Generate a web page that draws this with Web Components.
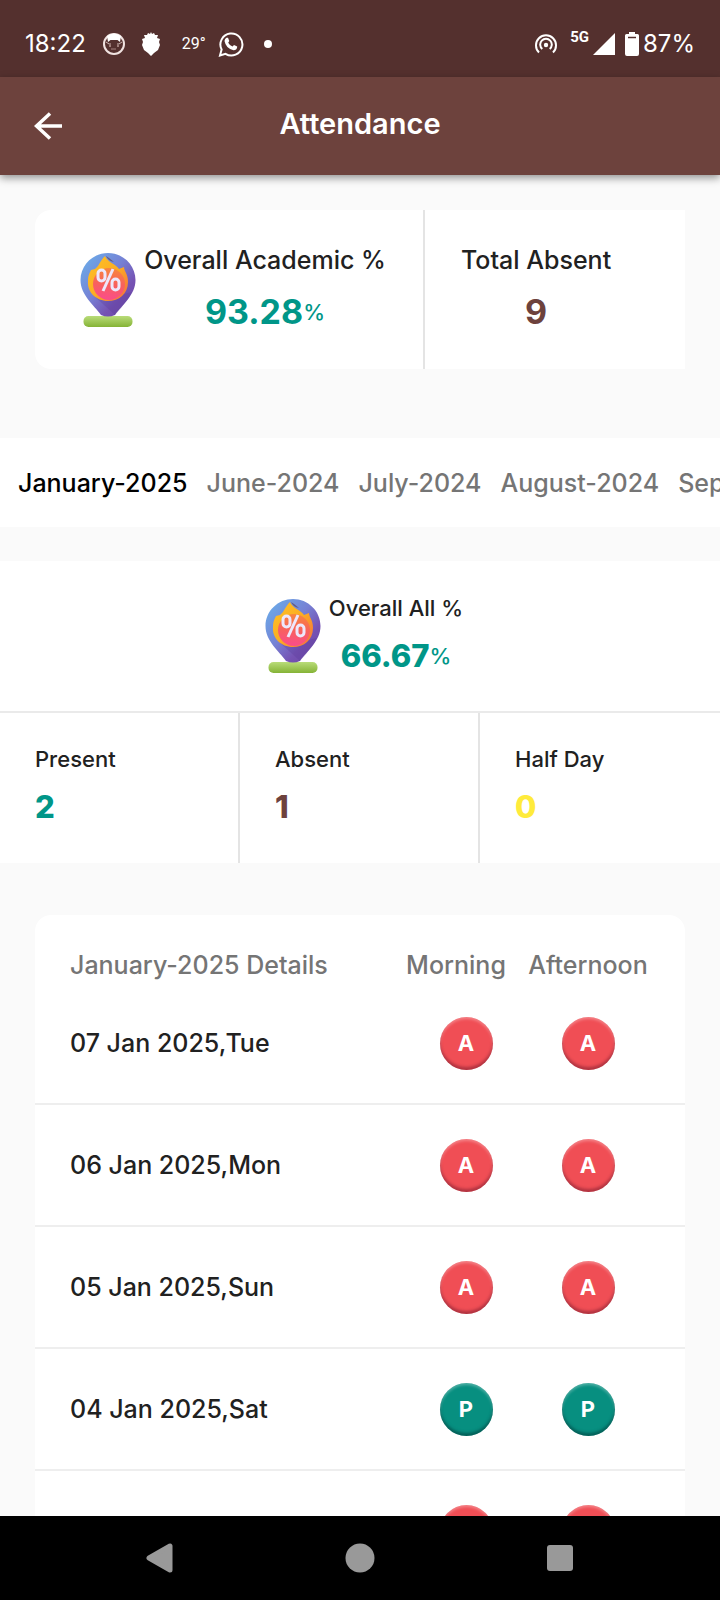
<!DOCTYPE html>
<html lang="en">
<head>
<meta charset="utf-8">
<meta name="viewport" content="width=device-width, initial-scale=1">
<title>Attendance</title>
<style>
  html, body { margin: 0; background: #fafafa; }
  body { font-family: Inter, Roboto, sans-serif; color: #212121; }
</style>
</head>
<body>
<attendance-app></attendance-app>
<script>
const define = (name, html, setup) => {
  const template = document.createElement('template');
  template.innerHTML = html;
  customElements.define(name, class extends HTMLElement {
    constructor() {
      super();
      this.attachShadow({ mode: 'open' }).append(template.content.cloneNode(true));
    }
    connectedCallback() { if (setup) setup(this, this.shadowRoot); }
  });
};

define('status-bar', `
<style>
  :host { display: flex; justify-content: space-between; align-items: center; flex: none;
    height: 77px; padding: 10px 25px 0; box-sizing: border-box; background: #54302e; color: #fff;
    font: 400 24px/28px Inter, sans-serif; }
  .group { display: flex; align-items: center; }
  svg { display: block; }
  .left svg { margin-left: 16px; }
  .temp { font: 400 16px/28px Roboto, sans-serif; margin-left: 22px; }
  .left .chat { margin-left: 12px; }
  .left .dot { margin-left: 20px; }
  .net { font: 700 15px/15px Roboto, sans-serif; margin-left: 13px; align-self: flex-start; }
  .signal { margin-left: 4px; }
  .battery { margin: 0 4px 0 10px; }
</style>
<div class="group left">
  <span>18:22</span>
  <svg width="24" height="24" viewBox="0 0 24 24"><circle cx="12" cy="12" r="10" fill="none" stroke="#f0e2e0" stroke-width="2"/><path d="M5 4Q12 -1 19 4L18 10L15.500 8H8.500L6 10Z" fill="#fff"/><path d="M4 10L7 12H9M20 10L17 12H15" stroke="#cdb5b2" fill="none"/><circle cx="8" cy="14" r="1" fill="#b99895"/><circle cx="16" cy="14" r="1" fill="#b99895"/><path d="M9 17H14" fill="none" stroke="#a58380"/></svg>
  <svg width="18" height="24" viewBox="0 0 18 24"><path d="M9 0L10 2L12 1L13 3H16L15 6L18 7L17 10L18 13L16 18L12 21L9 24L6 21L2 18L0 13L1 10L0 7L3 6L2 3H5L6 1L8 2Z" fill="#fff"/></svg>
  <span class="temp">29°</span>
  <svg class="chat" width="26" height="26" viewBox="0 0 26 26"><path d="M2 24.500L3.600 18.500A11 11 0 1 1 7.500 22.800Z" fill="none" stroke="#fff" stroke-width="2"/><path d="M8.500 6.800H10L11.300 10L10.200 11.700Q11.800 14.500 14.500 15.600L16 14L19.200 15.500Q19.300 19 15.500 19.200Q8 17.800 6.500 10Q6.700 7.800 8.500 6.800Z" fill="#fff"/></svg>
  <svg class="dot" width="8" height="8"><circle cx="4" cy="4" r="4" fill="#fff"/></svg>
</div>
<div class="group">
  <svg width="22" height="22" viewBox="0 0 22 22" fill="none" stroke="#fff" stroke-width="2"><path d="M4 19.500A10 10 0 1 1 18 19.500M7.300 16A5.800 5.800 0 1 1 14.700 16"/><circle cx="11" cy="12" r="2.200" fill="#fff" stroke="none"/></svg>
  <span class="net">5G</span>
  <svg class="signal" width="22" height="22" viewBox="0 0 22 22"><path d="M22 0V22H0Z" fill="#fff"/></svg>
  <svg class="battery" width="14" height="24" viewBox="0 0 14 24"><path d="M4 0H10V2H12.500Q14 2 14 3.500V22Q14 24 12 24H2Q0 24 0 22V3.500Q0 2 1.500 2H4Z" fill="#fff"/><path d="M3 5.500H11" stroke="#54302e" stroke-width="1.500"/></svg>
  <span>87%</span>
</div>`);

define('app-bar', `
<style>
  :host { display: grid; grid-template-columns: 64px 1fr 64px; align-items: center; flex: none;
    height: 98px; padding: 0 16px; box-sizing: border-box; background: #6d423d; color: #fff;
    box-shadow: 0 3px 8px rgba(0,0,0,.42); position: relative; z-index: 1; }
  button { display: grid; place-items: center; width: 64px; height: 64px; padding: 0; border: 0; background: none; color: inherit; }
  h1 { margin: 0; text-align: center; font-size: 29px; line-height: 36px; font-weight: 600; padding-bottom: 4px; }
</style>
<button type="button" aria-label="Back"><svg width="28" height="28" viewBox="0 0 28 28" fill="none" stroke="#fff" stroke-width="3.500"><path d="M28 14H2.500M16 1.500L2.500 14L16 26.500"/></svg></button>
<h1><slot></slot></h1>`);

define('percent-pin', `
<style>:host { display: block; flex: none; width: 56px; height: 76px; } svg { display: block; }</style>
<svg width="56" height="76" viewBox="0 0 56 76" aria-hidden="true">
  <defs>
    <linearGradient id="pin" x1="0" y1="0" x2="1" y2="1"><stop offset="0" stop-color="#69b3ec"/><stop offset=".45" stop-color="#7680d4"/><stop offset=".7" stop-color="#7552b3"/><stop offset="1" stop-color="#6844a4"/></linearGradient>
    <linearGradient id="flame" x1="0" y1="0" x2="1" y2="1"><stop offset="0" stop-color="#ffc226"/><stop offset=".5" stop-color="#fbae22"/><stop offset="1" stop-color="#f36b40"/></linearGradient>
    <linearGradient id="core" x1=".5" y1="0" x2=".4" y2="1"><stop offset="0" stop-color="#f8863e"/><stop offset=".5" stop-color="#f8615c"/><stop offset="1" stop-color="#fa4c8c"/></linearGradient>
    <linearGradient id="base" x1="0" y1="0" x2="0" y2="1"><stop offset="0" stop-color="#b9dc79"/><stop offset="1" stop-color="#85b336"/></linearGradient>
  </defs>
  <rect x="3.500" y="64" width="49" height="11" rx="5" fill="url(#base)"/>
  <path d="M28 1C43 1 55.500 13 55.500 28C55.500 43 42 53 35 63Q28 66 21 63C14 53 .5 43 .5 28C.5 13 13 1 28 1Z" fill="url(#pin)"/>
  <path d="M13 43L35 63Q46 51 52 40L43 42Z" fill="#573b98" opacity=".28"/>
  <path d="M25 4C27 10 36 12 39 17L44 15C44 19 48 22 48 30C48 42 39 49 28 49C16 49 7 40 8 29C8 24 9 22 11 18L15 17C19 14 20 9 25 4Z" fill="url(#flame)"/>
  <path d="M26 4Q28 9 34 10L29 6Z" fill="#665b80"/>
  <circle cx="29" cy="32" r="16" fill="url(#core)"/>
  <g fill="none" stroke="#ede7fb" stroke-width="3"><rect x="18" y="18" width="7" height="11" rx="3.500"/><rect x="32" y="27" width="7" height="11" rx="3.500"/><path d="M33 17L23 39"/></g>
</svg>`);

/* A caption over a large figure; "unit" adds a small suffix. */
define('stat-figure', `
<style>
  :host { display: flex; flex-direction: column; align-items: flex-start; }
  :host([center]) { align-items: center; }
  .label { font-size: 22px; line-height: 28px; font-weight: 500; white-space: nowrap; }
  :host([large]) .label { font-size: 25px; }
  .value { margin-top: 12px; font-size: 31px; line-height: 44px; font-weight: 800; color: var(--tone, #009688); white-space: nowrap; display: flex; align-items: center; }
  :host([large]) .value { margin-top: 16px; font-size: 34px; font-weight: 700; }
  .unit { font-size: 22px; font-weight: 500; }
</style>
<span class="label"></span>
<span class="value"><span class="num"></span><span class="unit"></span></span>`,
(el, root) => {
  root.querySelector('.label').textContent = el.getAttribute('label');
  root.querySelector('.num').textContent = el.getAttribute('value');
  root.querySelector('.unit').textContent = el.getAttribute('unit') || '';
});

define('overall-card', `
<style>
  :host { display: grid; grid-template-columns: 3fr 2fr; margin: 35px 35px 0; min-height: 159px; background: #fff; border-radius: 16px 0 0 16px; }
  .cell { display: flex; align-items: center; }
  .academic { border-right: 2px solid #e4e4e4; justify-content: center; gap: 8px; padding-left: 8px; }
  .absent { padding-left: 36px; }
</style>
<div class="cell academic"><percent-pin></percent-pin><stat-figure large center label="Overall Academic %" value="93.28" unit="%"></stat-figure></div>
<div class="cell absent"><stat-figure large center label="Total Absent" value="9" style="--tone:#6d423d"></stat-figure></div>`);

define('month-tabs', `
<style>
  :host { display: flex; gap: 19px; align-items: center; margin-top: 69px; height: 89px; padding: 0 18px; background: #fff; overflow: hidden; }
  button { flex: none; padding: 0; border: 0; background: none; color: #757575; font: 500 25px/32px Inter, sans-serif; }
  button[aria-selected=true] { color: #000; }
</style>
<button role="tab" aria-selected="true">January-2025</button><button role="tab">June-2024</button><button role="tab">July-2024</button><button role="tab">August-2024</button><button role="tab">September-2024</button>`,
(el) => el.setAttribute('role', 'tablist'));

define('month-summary', `
<style>
  :host { display: block; margin-top: 34px; background: #fff; }
  .top { display: flex; justify-content: center; align-items: center; gap: 8px; height: 150px; padding-left: 8px; border-bottom: 2px solid #eaeaea; }
  .cells { display: grid; grid-template-columns: repeat(3, 1fr); }
  .cells > * { padding: 32px 0 34px 35px; border-right: 2px solid #e4e4e4; }
  .cells > :last-child { border-right: 0; }
</style>
<div class="top"><percent-pin></percent-pin><stat-figure center label="Overall All %" value="66.67" unit="%"></stat-figure></div>
<div class="cells">
  <stat-figure label="Present" value="2"></stat-figure>
  <stat-figure label="Absent" value="1" style="--tone:#6d423d"></stat-figure>
  <stat-figure label="Half Day" value="0" style="--tone:#ffeb3b"></stat-figure>
</div>`);

define('mark-badge', `
<style>
  :host { display: grid; place-items: center; width: 53px; height: 53px; margin: 0 auto; border-radius: 50%;
    background: #f04e55; color: #fff; font: 700 22px/28px Inter, sans-serif;
    box-shadow: inset 0 -3px 3px rgba(100,20,40,.45), inset 0 2px 3px rgba(255,255,255,.3); }
  :host([present]) { background: #078f80; box-shadow: inset 0 -3px 3px rgba(0,50,50,.5), inset 0 2px 3px rgba(255,255,255,.3); }
</style><slot></slot>`);

define('day-table', `
<style>
  :host { display: block; margin: 52px 35px 0; background: #fff; border-radius: 16px 16px 0 0; }
  table { width: 100%; border-collapse: separate; border-spacing: 0; table-layout: fixed; }
  th, td { padding: 0; font-weight: 500; font-size: 25px; line-height: 32px; white-space: nowrap; box-sizing: border-box; }
  thead th { height: 68px; padding-top: 32px; color: #757575; }
  thead .morning { padding-right: 20px; }
  th:first-child { text-align: left; padding-left: 35px; }
  tbody td, tbody th { height: 122px; border-bottom: 2px solid #eee; }
  .slot { width: 122px; }
  .end { width: 36px; }
</style>
<table>
  <colgroup><col><col class="slot"><col class="slot"><col class="end"></colgroup>
  <thead><tr><th scope="col">January-2025 Details</th><th scope="col" class="morning">Morning</th><th scope="col">Afternoon</th><td></td></tr></thead>
  <tbody></tbody>
</table>`,
(el, root) => {
  const days = [['07 Jan 2025,Tue', 'A'], ['06 Jan 2025,Mon', 'A'], ['05 Jan 2025,Sun', 'A'], ['04 Jan 2025,Sat', 'P'], ['', '']];
  root.querySelector('tbody').innerHTML = days.map(([day, mark]) => {
    const cell = `<td><mark-badge${mark === 'P' ? ' present' : ''}>${mark}</mark-badge></td>`;
    return `<tr><th scope="row">${day}</th>${cell}${cell}<td></td></tr>`;
  }).join('');
});

define('system-nav', `
<style>
  :host { display: flex; justify-content: space-around; align-items: center; flex: none; height: 84px; padding: 0 60px; background: #000; }
  button { display: grid; place-items: center; width: 64px; height: 64px; padding: 0; border: 0; background: none; }
</style>
<button aria-label="Back"><svg width="28" height="30" viewBox="0 0 28 30"><path d="M3 15L24 3V27Z" fill="#999" stroke="#999" stroke-width="5" stroke-linejoin="round"/></svg></button>
<button aria-label="Home"><svg width="30" height="30"><circle cx="15" cy="15" r="14.500" fill="#999"/></svg></button>
<button aria-label="Recent apps"><svg width="28" height="28"><rect x="1" y="1" width="26" height="26" rx="3" fill="#999"/></svg></button>`);

define('attendance-app', `
<style>
  :host { display: flex; flex-direction: column; height: 100vh; }
  main { flex: 1; min-height: 0; overflow: hidden auto; scrollbar-width: none; }
</style>
<status-bar></status-bar>
<app-bar>Attendance</app-bar>
<main>
  <overall-card></overall-card>
  <month-tabs></month-tabs>
  <month-summary></month-summary>
  <day-table></day-table>
</main>
<system-nav></system-nav>`);
</script>
</body>
</html>
